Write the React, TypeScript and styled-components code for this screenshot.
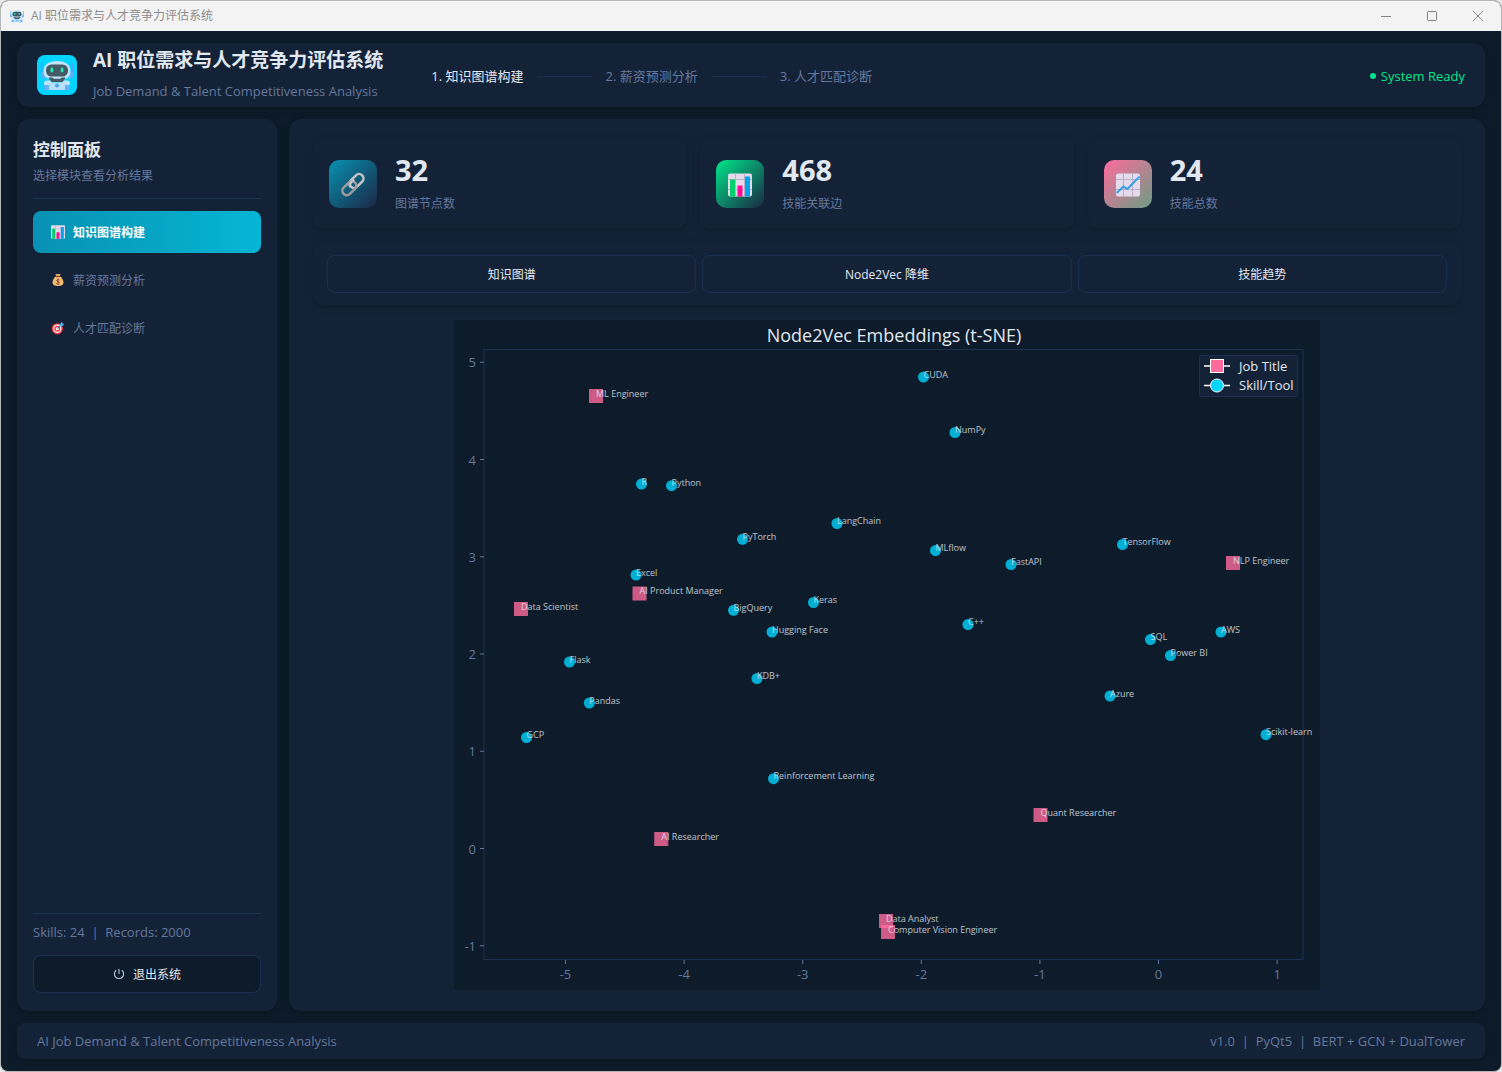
import React from "react";
import styled, { createGlobalStyle, css } from "styled-components";

const color = {
  base: "#0d1b2a",
  panel: "#142238",
  line: "#1b2f50",
  text: "#e2e8f0",
  muted: "#64789b",
  green: "#00e68a",
  cyan: "#00d4ff",
  pink: "#ff6b9d",
};

const fontStack = `"Open Sans", "Noto Sans CJK SC", sans-serif`;

const GlobalStyle = createGlobalStyle`
  * { box-sizing: border-box; }
  body { margin: 0; background: #e8e8e8; }
  h1, h2, p, dl, dd, dt { margin: 0; }
  button { font-family: inherit; cursor: pointer; }
`;

const Window = styled.div`
  display: flex;
  flex-direction: column;
  height: 100vh;
  min-height: 640px;
  border: 1px solid #b4b6b8;
  border-radius: 8px;
  overflow: hidden;
  background: ${color.base};
  color: ${color.text};
  font-family: ${fontStack};
  font-size: 12px;
  line-height: 18px;
`;

const TitleBar = styled.div`
  flex: none;
  display: flex;
  align-items: center;
  gap: 7px;
  height: 30px;
  padding-left: 9px;
  background: #f3f3f3;
  color: #8c8c8c;
`;

const WindowControls = styled.div`
  display: flex;
  margin-left: auto;
`;

const WindowButton = styled.button`
  display: grid;
  place-items: center;
  width: 46px;
  height: 30px;
  padding: 0;
  border: 0;
  background: none;
`;

const Body = styled.div`
  flex: 1;
  min-height: 0;
  display: flex;
  flex-direction: column;
  gap: 12px;
  padding: 12px 16px;
`;

const surface = css`
  background: ${color.panel};
  border-radius: 12px;
  box-shadow: 0 2px 8px rgba(0, 0, 0, 0.24);
`;

const Header = styled.header`
  ${surface}
  flex: none;
  display: flex;
  align-items: center;
  height: 64px;
  padding: 0 20px;
`;

const Logo = styled.div`
  display: grid;
  place-items: center;
  width: 40px;
  height: 40px;
  margin-right: 16px;
  border-radius: 8px;
  background: ${color.cyan};
`;

const AppName = styled.h1`
  font-size: 19px;
  line-height: 30px;
  font-weight: 700;
`;

const Brand = styled.div`
  display: flex;
  flex-direction: column;
  gap: 6px;
  height: 60px;
`;

const Tagline = styled.p`
  color: ${color.muted};
  font-size: 13px;
  line-height: 20px;
`;

const Steps = styled.ol`
  display: flex;
  align-items: center;
  gap: 14px;
  margin: 0 0 0 48px;
  padding: 2px 0 0;
  list-style: none;
`;

const Step = styled.li<{ $active?: boolean }>`
  display: flex;
  align-items: center;
  gap: 14px;
  color: ${(p) => (p.$active ? color.text : color.muted)};
  font-size: 13px;
  line-height: 20px;

  &:not(:first-child)::before {
    content: "";
    width: 54px;
    height: 1px;
    background: ${color.line};
  }
`;

const Status = styled.div`
  display: flex;
  align-items: center;
  gap: 5px;
  margin-left: auto;
  padding-top: 2px;
  color: ${color.green};
  font-size: 13px;

  &::before {
    content: "";
    width: 6px;
    height: 6px;
    border-radius: 50%;
    background: ${color.green};
  }
`;

const Columns = styled.div`
  flex: 1;
  min-height: 0;
  display: flex;
  gap: 12px;
`;

const Sidebar = styled.aside`
  ${surface}
  flex: none;
  display: flex;
  flex-direction: column;
  width: 260px;
  padding: 18px 16px;
`;

const SidebarTitle = styled.h2`
  font-size: 17px;
  line-height: 26px;
  font-weight: 700;
`;

const SidebarHint = styled.p`
  margin-top: 3px;
  padding-bottom: 12px;
  border-bottom: 1px solid ${color.line};
  color: ${color.muted};
  line-height: 20px;
`;

const Nav = styled.nav`
  display: flex;
  flex-direction: column;
  gap: 6px;
  margin-top: 12px;
`;

const NavItem = styled.button<{ $active?: boolean }>`
  display: flex;
  align-items: center;
  gap: 8px;
  height: 42px;
  padding: 0 18px;
  border: 0;
  border-radius: 8px;
  background: ${(p) => (p.$active ? "linear-gradient(90deg, #0891b2, #06b6d4)" : "none")};
  color: ${(p) => (p.$active ? "#ffffff" : color.muted)};
  font-size: 12px;
  font-weight: ${(p) => (p.$active ? 700 : 400)};
`;

const SidebarFoot = styled.div`
  display: flex;
  flex-direction: column;
  gap: 13px;
  margin-top: auto;
  padding-top: 8px;
  border-top: 1px solid ${color.line};
  color: ${color.muted};
  font-size: 13px;
  line-height: 20px;
`;

const OutlineButton = styled.button<{ $dark?: boolean }>`
  flex: 1 1 0;
  display: flex;
  align-items: center;
  justify-content: center;
  gap: 8px;
  min-height: 38px;
  border: 1px solid ${color.line};
  border-radius: 8px;
  background: ${(p) => (p.$dark ? color.base : color.panel)};
  color: ${color.text};
  font-size: 12px;
`;

const Main = styled.main`
  ${surface}
  flex: 1;
  min-width: 0;
  display: flex;
  flex-direction: column;
  gap: 14px;
  padding: 20px 24px;
`;

const subtle = css`
  background: ${color.panel};
  border-radius: 10px;
  box-shadow: 0 2px 8px rgba(0, 0, 0, 0.2);
`;

const Stats = styled.dl`
  flex: none;
  display: grid;
  grid-template-columns: repeat(3, 1fr);
  gap: 14px;
`;

const StatCard = styled.div`
  ${subtle}
  display: flex;
  align-items: center;
  gap: 18px;
  height: 90px;
  padding: 0 16px;
`;

const StatIcon = styled.div<{ $from: string; $to: string }>`
  display: grid;
  place-items: center;
  width: 48px;
  height: 48px;
  padding-top: 2px;
  border-radius: 10px;
  background: linear-gradient(135deg, ${(p) => p.$from}, ${(p) => p.$to});
`;

const StatText = styled.div`
  display: flex;
  flex-direction: column-reverse;
  gap: 7px;
  padding-bottom: 2px;
`;

const StatValue = styled.dd`
  font-size: 29px;
  line-height: 34px;
  font-weight: 700;
`;

const StatLabel = styled.dt`
  color: ${color.muted};
  line-height: 20px;
`;

const Tabs = styled.div`
  ${subtle}
  flex: none;
  display: flex;
  gap: 6px;
  padding: 12px 14px;
`;

const Figure = styled.div`
  flex: 1;
  min-height: 0;
  display: flex;
  justify-content: center;
  padding: 1px 0;

  svg {
    display: block;
    max-width: 100%;
    height: 100%;
    font-family: ${fontStack};
  }
`;

const Footer = styled.footer`
  ${surface}
  flex: none;
  display: flex;
  align-items: center;
  justify-content: space-between;
  height: 36px;
  padding: 0 20px;
  border-radius: 8px;
  color: ${color.muted};
  font-size: 13px;
`;

function RobotIcon({ size }: { size: number }) {
  return (
    <svg width={size} height={size} viewBox="0 0 34 34" aria-hidden="true">
      <path d="M1.5 6v12M32.5 6v12" stroke="#4fa3f7" strokeWidth="1.6" strokeLinecap="round" />
      <path d="M1 14h4v7H3.500Q1 20 1 17zM33 14h-4v7h1.500Q33 20 33 17z" fill="#5eb1fa" />
      <path d="M17 3c8.500 0 13.500 3.500 13.500 10.500 0 6.500-5 8.500-13.500 8.500S3.500 20 3.500 13.500C3.500 6.500 8.500 3 17 3z" fill="#bfe4fb" />
      <rect x="6" y="6.500" width="22" height="12" rx="5.500" fill="#455a64" />
      <rect x="10.500" y="9.500" width="2.800" height="5" rx="1.400" fill="#1de9b6" />
      <rect x="20.700" y="9.500" width="2.800" height="5" rx="1.400" fill="#1de9b6" />
      <path d="M8.500 19.500h3.500l2 1.200h6l2-1.200h3.500L23 24H11z" fill="#455a64" />
      <path d="M4 25.500q0-3 3-3h3l2 2h10l2-2h3q3 0 3 3V29H4z" fill="#bfe4fb" />
      <path d="M4 27h5v5H4zM25 27h5v5h-5z" fill="#5eb1fa" />
      <path d="M9 25h16v7H9z" fill="#b5dffb" />
      <circle cx="17" cy="27.500" r="1.900" fill="#4fa3f7" />
    </svg>
  );
}

function ChartSheet({ size, children }: { size: number; children: React.ReactNode }) {
  return (
    <svg width={size} height={size} viewBox="0 0 24 24" aria-hidden="true">
      <rect x="0" y="0.500" width="24" height="23" rx="2" fill="#e3dbec" />
      <path d="M0 6.500h24M0 16.500h24M7.500 0.500v23M16.500 0.500v23" stroke="#b9afc6" strokeWidth="1" />
      {children}
    </svg>
  );
}

function BarsIcon({ size }: { size: number }) {
  return (
    <ChartSheet size={size}>
      <path d="M2 6.500h5v17H2z" fill="#00d26a" />
      <path d="M9.500 12.500h5v11h-5z" fill="#ff0d93" />
      <path d="M17 3.500h5v20h-5z" fill="#00a6ed" />
    </ChartSheet>
  );
}

function TrendIcon({ size }: { size: number }) {
  return (
    <ChartSheet size={size}>
      <path d="M.7 20 7.500 13.500l3.800 2.500L23.700 3.500" fill="none" stroke="#2f9fe8" strokeWidth="1.800" />
    </ChartSheet>
  );
}

function LinkIcon() {
  return (
    <svg width="26" height="26" viewBox="0 0 26 26" fill="none" strokeWidth="2.500" aria-hidden="true">
      <rect x="8.500" y="4.600" width="16" height="8.800" rx="4.400" transform="rotate(-45 16.500 9)" stroke="#c4c4c6" />
      <rect x="1.300" y="11.800" width="16" height="8.800" rx="4.400" transform="rotate(-45 9.300 16.200)" stroke="#9b9b9f" />
      <path d="M10.500 15q-1.500-2.500.5-4.700l3-3" stroke="#c4c4c6" />
    </svg>
  );
}

function MoneyIcon() {
  return (
    <svg width="14" height="14" viewBox="0 0 14 14" aria-hidden="true">
      <path d="M4.500 1h5L8.500 4h-3z" fill="#e8ad65" />
      <path d="M5.500 3h3c2.500 1.500 4 4 4 6.500S10.500 13 7 13s-5.500-1-5.500-3.500S3 4.500 5.500 3z" fill="#f3ba72" />
      <path d="M4.800 3.500h4.400" stroke="#7d4533" strokeWidth="1.200" />
      <path d="M8.500 7q-1.500-1-2.500 0t1 1.700 1 1.800-2.600 0M7 5.800v5.800" fill="none" stroke="#7d4533" strokeWidth=".9" />
    </svg>
  );
}

function TargetIcon() {
  return (
    <svg width="14" height="14" viewBox="0 0 14 14" aria-hidden="true">
      <circle cx="6.300" cy="7.800" r="5.600" fill="#f92f3c" />
      <circle cx="6.300" cy="7.800" r="4.200" fill="#fff" />
      <circle cx="6.300" cy="7.800" r="3" fill="#f92f3c" />
      <circle cx="6.300" cy="7.800" r="1.600" fill="#fff" />
      <path d="M6.300 7.800 11 3" stroke="#1c7bb8" strokeWidth="1" />
      <path d="M8.500 3.500 11 .8l.5 1.800 1.900.5-2.700 2.600-2-.3z" fill="#46b5f0" />
    </svg>
  );
}

function PowerIcon() {
  return (
    <svg width="12" height="12" viewBox="0 0 12 12" fill="none" stroke="#b9cbe0" strokeWidth="1.100" aria-hidden="true">
      <path d="M3.200 2.300a4.600 4.600 0 1 0 5.600 0M6 1v5" />
    </svg>
  );
}

type Point = [label: string, x: number, y: number];

const jobs: Point[] = [
  ["ML Engineer", 142, 76],
  ["AI Product Manager", 185.5, 273.5],
  ["Data Scientist", 67, 289],
  ["NLP Engineer", 779, 243],
  ["Quant Researcher", 586.5, 495],
  ["AI Researcher", 207.300, 519],
  ["Data Analyst", 432, 601],
  ["Computer Vision Engineer", 434, 612],
];

const skills: Point[] = [
  ["CUDA", 469.5, 57],
  ["NumPy", 501, 112.5],
  ["R", 187.5, 164],
  ["Python", 217.5, 165.700],
  ["LangChain", 383, 203.5],
  ["PyTorch", 288.5, 219.300],
  ["MLflow", 481.5, 230.5],
  ["FastAPI", 557, 244.5],
  ["TensorFlow", 668.5, 224.5],
  ["Excel", 182, 255],
  ["BigQuery", 279.5, 290.300],
  ["Keras", 359.5, 282.5],
  ["Hugging Face", 318, 312],
  ["C++", 514, 304.5],
  ["SQL", 696.5, 319.5],
  ["AWS", 767, 312],
  ["Power BI", 716.5, 335.5],
  ["Flask", 115.5, 342],
  ["KDB+", 303, 358.5],
  ["Azure", 656, 376],
  ["Pandas", 135.300, 383],
  ["GCP", 72.5, 417.5],
  ["Scikit-learn", 812, 414.700],
  ["Reinforcement Learning", 319.5, 458.700],
];

const toX = (v: number) => 704.5 + v * 118.6;
const toY = (v: number) => 528.5 - v * 97.25;

function EmbeddingChart() {
  return (
    <svg viewBox="0 0 866 670" role="img" aria-label="Node2Vec Embeddings (t-SNE)">
      <rect width="866" height="670" fill={color.base} />
      <text x="440" y="22" textAnchor="middle" fontSize="18" fill={color.text}>
        Node2Vec Embeddings (t-SNE)
      </text>
      <rect x="30" y="29.5" width="819" height="610" fill="none" stroke="#1e3050" />
      <g fill={color.muted} stroke="none" fontSize="13">
        {[-5, -4, -3, -2, -1, 0, 1].map((v) => (
          <g key={v}>
            <path d={`M${toX(v)} 640v4`} stroke={color.muted} />
            <text x={toX(v)} y="659" textAnchor="middle">{v}</text>
          </g>
        ))}
        {[-1, 0, 1, 2, 3, 4, 5].map((v) => (
          <g key={v}>
            <path d={`M30 ${toY(v)}h-4`} stroke={color.muted} />
            <text x="22" y={toY(v) + 5} textAnchor="end">{v}</text>
          </g>
        ))}
      </g>
      {jobs.map(([label, x, y]) => (
        <rect key={label} x={x - 6.5} y={y - 6.5} width="13" height="13" fill={color.pink} stroke={color.pink} opacity="0.8" />
      ))}
      {skills.map(([label, x, y]) => (
        <circle key={label} cx={x} cy={y} r="5.5" fill={color.cyan} opacity="0.8" />
      ))}
      <g fontSize="9" fill={color.text} opacity="0.8">
        {[...jobs, ...skills].map(([label, x, y]) => (
          <text key={label} x={x} y={y + 0.5}>{label}</text>
        ))}
      </g>
      <rect x="745.5" y="35.500" width="98" height="41" rx="2" fill={color.panel} stroke="#1e3050" />
      <g stroke="#fff" strokeWidth="1.500">
        <path d="M750 46h26M750 65.500h26" />
        <rect x="756.500" y="39.500" width="13" height="13" fill={color.pink} strokeWidth="1" />
        <circle cx="763" cy="65.500" r="6.500" fill={color.cyan} strokeWidth="1" />
      </g>
      <g fontSize="13" fill={color.text}>
        <text x="785" y="51">Job Title</text>
        <text x="785" y="70">Skill/Tool</text>
      </g>
    </svg>
  );
}

const stats = [
  { value: 32, label: "图谱节点数", from: "#0891b2", to: "#1a2744", icon: <LinkIcon /> },
  { value: 468, label: "技能关联边", from: "#00e68a", to: "#1a2744", icon: <BarsIcon size={24} /> },
  { value: 24, label: "技能总数", from: "#ff6b9d", to: "#6b9d85", icon: <TrendIcon size={24} /> },
];

export default function App() {
  return (
    <>
      <GlobalStyle />
      <Window>
        <TitleBar>
          <RobotIcon size={14} />
          <span>AI 职位需求与人才竞争力评估系统</span>
          <WindowControls>
            <WindowButton aria-label="Minimize">
              <svg width="10" height="10" stroke="#858585"><path d="M0 5.500h10" /></svg>
            </WindowButton>
            <WindowButton aria-label="Maximize">
              <svg width="10" height="10" stroke="#858585" fill="none"><rect x=".5" y=".5" width="9" height="9" rx="1" /></svg>
            </WindowButton>
            <WindowButton aria-label="Close">
              <svg width="10" height="10" stroke="#858585"><path d="M0 0l10 10M10 0 0 10" /></svg>
            </WindowButton>
          </WindowControls>
        </TitleBar>
        <Body>
          <Header>
            <Logo><RobotIcon size={34} /></Logo>
            <Brand>
              <AppName>AI 职位需求与人才竞争力评估系统</AppName>
              <Tagline>Job Demand &amp; Talent Competitiveness Analysis</Tagline>
            </Brand>
            <Steps>
              <Step $active>1. 知识图谱构建</Step>
              <Step>2. 薪资预测分析</Step>
              <Step>3. 人才匹配诊断</Step>
            </Steps>
            <Status>System Ready</Status>
          </Header>
          <Columns>
            <Sidebar>
              <SidebarTitle>控制面板</SidebarTitle>
              <SidebarHint>选择模块查看分析结果</SidebarHint>
              <Nav>
                <NavItem $active><BarsIcon size={14} />知识图谱构建</NavItem>
                <NavItem><MoneyIcon />薪资预测分析</NavItem>
                <NavItem><TargetIcon />人才匹配诊断</NavItem>
              </Nav>
              <SidebarFoot>
                <span>Skills: 24 &nbsp;|&nbsp; Records: 2000</span>
                <OutlineButton $dark><PowerIcon />退出系统</OutlineButton>
              </SidebarFoot>
            </Sidebar>
            <Main>
              <Stats>
                {stats.map((s) => (
                  <StatCard key={s.label}>
                    <StatIcon $from={s.from} $to={s.to}>{s.icon}</StatIcon>
                    <StatText>
                      <StatLabel>{s.label}</StatLabel>
                      <StatValue>{s.value}</StatValue>
                    </StatText>
                  </StatCard>
                ))}
              </Stats>
              <Tabs>
                <OutlineButton>知识图谱</OutlineButton>
                <OutlineButton>Node2Vec 降维</OutlineButton>
                <OutlineButton>技能趋势</OutlineButton>
              </Tabs>
              <Figure><EmbeddingChart /></Figure>
            </Main>
          </Columns>
          <Footer>
            <span>AI Job Demand &amp; Talent Competitiveness Analysis</span>
            <span>v1.0 &nbsp;|&nbsp; PyQt5 &nbsp;|&nbsp; BERT + GCN + DualTower</span>
          </Footer>
        </Body>
      </Window>
    </>
  );
}
